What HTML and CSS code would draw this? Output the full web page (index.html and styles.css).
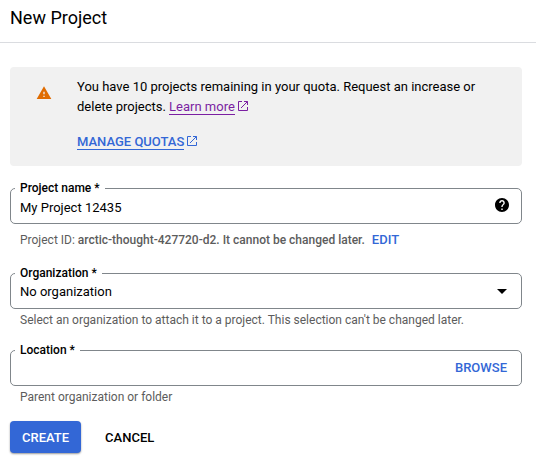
FILE: index.html
```html
<!DOCTYPE html>
<html lang="en">
<head>
<meta charset="utf-8">
<meta name="viewport" content="width=device-width, initial-scale=1">
<title>New Project</title>
<link rel="stylesheet" href="styles.css">
</head>
<body>
<header class="page-header"><h1 class="page-title">New Project</h1></header>
<main class="page-body">
  <section class="banner">
    <svg class="banner-icon" viewBox="0 0 24 24" aria-hidden="true"><path d="M1 21h22L12 2 1 21zm12-3h-2v-2h2v2zm0-4h-2v-4h2v4z"/></svg>
    <div class="banner-content">
      <p class="banner-text">You have 10 projects remaining in your quota. Request an increase or delete projects. <a class="link link-visited" href="#learn"><span class="link-text">Learn more</span><svg class="link-icon" viewBox="0 0 14 14" aria-hidden="true"><path d="M6 2.5H2.5v9h9V8M8 2.5h3.500V6M11.500 2.500 5 9"/></svg></a></p>
      <p class="banner-action"><a class="link link-strong" href="#quotas"><span class="link-text">MANAGE QUOTAS</span><svg class="link-icon" viewBox="0 0 14 14" aria-hidden="true"><path d="M6 2.500H2.500v9h9V8M8 2.500h3.500V6M11.500 2.500 5 9"/></svg></a></p>
    </div>
  </section>
  <form class="form">
    <div class="field">
      <div class="field-box">
        <label class="field-label" for="name">Project name *</label>
        <input class="field-control" id="name" type="text" value="My Project 12435">
        <button class="icon-button" type="button" aria-label="Help">
          <svg class="help-icon" viewBox="2 2 20 20" aria-hidden="true"><path d="M12 2C6.480 2 2 6.480 2 12s4.480 10 10 10 10-4.480 10-10S17.520 2 12 2zm1 17h-2v-2h2v2zm2.070-7.750l-.9.920C13.450 12.900 13 13.500 13 15h-2v-.5c0-1.100.45-2.100 1.170-2.830l1.240-1.260c.37-.36.590-.86.590-1.410 0-1.100-.9-2-2-2s-2 .9-2 2H8c0-2.210 1.790-4 4-4s4 1.790 4 4c0 .88-.36 1.680-.93 2.250z"/></svg>
        </button>
      </div>
      <p class="hint hint-spaced">Project ID: <span class="hint-strong">arctic-thought-427720-d2. It cannot be changed later.</span><button class="text-button edit-button" type="button">EDIT</button></p>
    </div>
    <div class="field">
      <div class="field-box">
        <label class="field-label" for="org">Organization *</label>
        <select class="field-control" id="org"><option>No organization</option></select>
        <svg class="arrow-icon" viewBox="0 0 10 5" aria-hidden="true"><path d="M0 0h10L5 5z"/></svg>
      </div>
      <p class="hint">Select an organization to attach it to a project. This selection can't be changed later.</p>
    </div>
    <div class="field">
      <div class="field-box">
        <label class="field-label" for="location">Location *</label>
        <input class="field-control" id="location" type="text">
        <button class="text-button" type="button">BROWSE</button>
      </div>
      <p class="hint">Parent organization or folder</p>
    </div>
    <div class="actions">
      <button class="button button-primary" type="submit">CREATE</button>
      <button class="button" type="button">CANCEL</button>
    </div>
  </form>
</main>
</body>
</html>
```
FILE: styles.css
```css
* { box-sizing: border-box; }

body {
  margin: 0;
  background: #fff;
  color: #000;
  font: 13px/20px Roboto, sans-serif;
}

p, h1 { margin: 0; }

button, input, select {
  margin: 0;
  padding: 0;
  border: 0;
  background: none;
  color: inherit;
  font: inherit;
}

.page-header {
  padding: 6px 10px 12px;
  border-bottom: 1px solid #dadce0;
}

.page-title {
  font-size: 18px;
  font-weight: 400;
  line-height: 24px;
}

.page-body { padding: 24px 14px 14px 10px; }

.banner {
  display: flex;
  gap: 25px;
  padding: 10px 26px 14px;
  border-radius: 4px;
  background: #f1f1f1;
}

.banner-icon {
  flex: none;
  width: 16px;
  height: 16px;
  margin-top: 8px;
  fill: #e06c00;
}

.banner-action { margin-top: 15px; }

.link { color: #3367d6; text-decoration: none; }
.link-visited { color: #7b1fa2; }
.link-strong { font-weight: 500; }
.link-text { border-bottom: 1px solid; }

.link-icon {
  width: 14px;
  height: 14px;
  margin-left: 1px;
  vertical-align: -2px;
  fill: none;
  stroke: currentColor;
}

.form {
  display: flex;
  flex-direction: column;
  gap: 22px;
  margin-top: 22px;
}

.field-box {
  position: relative;
  display: flex;
  align-items: center;
  height: 36px;
  padding-right: 14px;
  border: 1px solid #80868b;
  border-radius: 5px;
}

.field-label {
  position: absolute;
  top: -9px;
  left: 4px;
  padding: 0 5px;
  background: #fff;
  font-size: 12px;
  font-weight: 500;
  line-height: 16px;
}

.field-control {
  flex: 1;
  min-width: 0;
  height: 34px;
  padding: 2px 0 0 9px;
  appearance: none;
  outline: 0;
}

.icon-button { display: flex; margin: 0 -2px 2px 0; }
.help-icon { width: 14px; height: 14px; }

.arrow-icon {
  width: 10px;
  height: 5px;
  pointer-events: none;
}

.hint {
  margin-top: 3px;
  padding-left: 10px;
  color: #5c5c5c;
  font-size: 12px;
  line-height: 16px;
}

.hint-spaced { margin: 8px 0 3px; }
.hint-strong { font-weight: 500; }

.text-button {
  color: #3367d6;
  font-size: 13px;
  font-weight: 500;
  line-height: 16px;
}

.edit-button { margin-left: 7px; }

.actions {
  display: flex;
  gap: 12px;
  margin-top: -6px;
}

.button {
  height: 32px;
  padding: 2px 12px 0;
  border-radius: 4px;
  font-weight: 500;
}

.button-primary {
  background: #3367d6;
  box-shadow: 0 1px 2px rgba(0, 0, 0, 0.4);
  color: #fff;
}
```
